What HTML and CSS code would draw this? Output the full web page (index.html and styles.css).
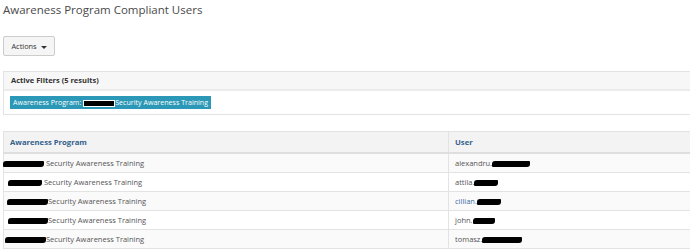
FILE: index.html
```html
<!DOCTYPE html>
<html lang="en">
<head>
    <meta charset="UTF-8">
    <title>Awareness Program Compliant Users</title>
    <link rel="stylesheet" href="styles.css">
</head>
<body>
    <h1 class="page-title">Awareness Program Compliant Users</h1>

    <div class="toolbar">
        <button class="btn">Actions <span class="caret"></span></button>
    </div>

    <div class="panel">
        <div class="panel-heading">Active Filters (5 results)</div>
        <div class="panel-body">
            <span class="label">Awareness Program: <span class="redact r-label"></span>Security Awareness Training</span>
        </div>
    </div>

    <table class="grid">
        <thead>
            <tr>
                <th class="col-program">Awareness Program</th>
                <th>User</th>
            </tr>
        </thead>
        <tbody>
            <tr>
                <td><span class="redact" style="width:41px;margin-left:-7px"></span> Security Awareness Training</td>
                <td>alexandru.<span class="redact" style="width:38px"></span></td>
            </tr>
            <tr>
                <td><span class="redact" style="width:34px;margin-left:-2px"></span> Security Awareness Training</td>
                <td>attila.<span class="redact" style="width:24px"></span></td>
            </tr>
            <tr>
                <td><span class="redact" style="width:41px;margin-left:-3px"></span>Security Awareness Training</td>
                <td><a href="#" class="user-link">cillian.</a><span class="redact" style="width:24px"></span></td>
            </tr>
            <tr>
                <td><span class="redact" style="width:40px;margin-left:-2px"></span>Security Awareness Training</td>
                <td>john.<span class="redact" style="width:22px"></span></td>
            </tr>
            <tr>
                <td><span class="redact" style="width:41px;margin-left:-5px"></span>Security Awareness Training</td>
                <td>tomasz.<span class="redact" style="width:40px"></span></td>
            </tr>
        </tbody>
    </table>
</body>
</html>
```

FILE: styles.css
```css
body {
    margin: 0;
    padding: 0 0 0 3px;
    font-family: "Open Sans", Arial, sans-serif;
    color: #444;
    background: #fff;
    overflow: hidden;
}

.page-title {
    font-size: 11.5px;
    font-weight: normal;
    color: #4a4a4a;
    margin: 0;
    height: 36px;
    line-height: 20px;
}

.toolbar {
    height: 35px;
}

.btn {
    display: block;
    font-family: "Open Sans", Arial, sans-serif;
    font-size: 7.4px;
    color: #333;
    background: #f5f5f5;
    border: 1px solid #ccc;
    border-radius: 2px;
    width: 52px;
    height: 20px;
    padding: 0;
    margin: 0;
}

.caret {
    display: inline-block;
    width: 0;
    height: 0;
    margin-left: 2px;
    vertical-align: middle;
    border-top: 3px solid #333;
    border-left: 3px solid transparent;
    border-right: 3px solid transparent;
}

.panel {
    border-top: 1px solid #e3e3e3;
    border-left: 1px solid #e3e3e3;
    border-bottom: 1px solid #e3e3e3;
    width: 720px;
    margin-bottom: 16px;
}

.panel-heading {
    background: #f7f7f7;
    border-bottom: 2px solid #ebebeb;
    height: 17px;
    line-height: 17px;
    padding-left: 7px;
    font-size: 7.5px;
    font-weight: bold;
    color: #333;
}

.panel-body {
    display: flex;
    align-items: flex-start;
    height: 23px;
    padding: 5px 0 0 6px;
    box-sizing: border-box;
}

.label {
    display: block;
    background: #2a98b6;
    color: #fff;
    font-size: 7.1px;
    height: 13px;
    line-height: 13px;
    padding: 0 3px;
    white-space: nowrap;
}

.redact {
    display: inline-block;
    height: 6px;
    background: #000;
    border-radius: 3px 1px 3px 1px;
    vertical-align: middle;
}

.r-label {
    width: 32px;
    height: 7px;
    border-radius: 0;
    border: 1px solid #fff;
    box-sizing: border-box;
}

.grid {
    border-collapse: collapse;
    width: 720px;
    font-size: 7.5px;
    border-top: 1px solid #e3e3e3;
    border-left: 1px solid #e3e3e3;
}

.grid th {
    background: #f3f3f3;
    color: #34618c;
    font-weight: bold;
    font-size: 7.7px;
    text-align: left;
    height: 20px;
    padding: 0 6px;
    border-bottom: 2px solid #dedede;
    border-right: 1px solid #e3e3e3;
}

.col-program {
    width: 432px;
}

.grid td {
    height: 18px;
    padding: 0 6px;
    border-bottom: 1px solid #e3e3e3;
    border-right: 1px solid #e3e3e3;
    color: #555;
    white-space: nowrap;
}

.grid tbody tr:nth-child(odd) td {
    background: #fafafa;
}

.user-link {
    color: #3a6ea5;
    text-decoration: none;
}
```
